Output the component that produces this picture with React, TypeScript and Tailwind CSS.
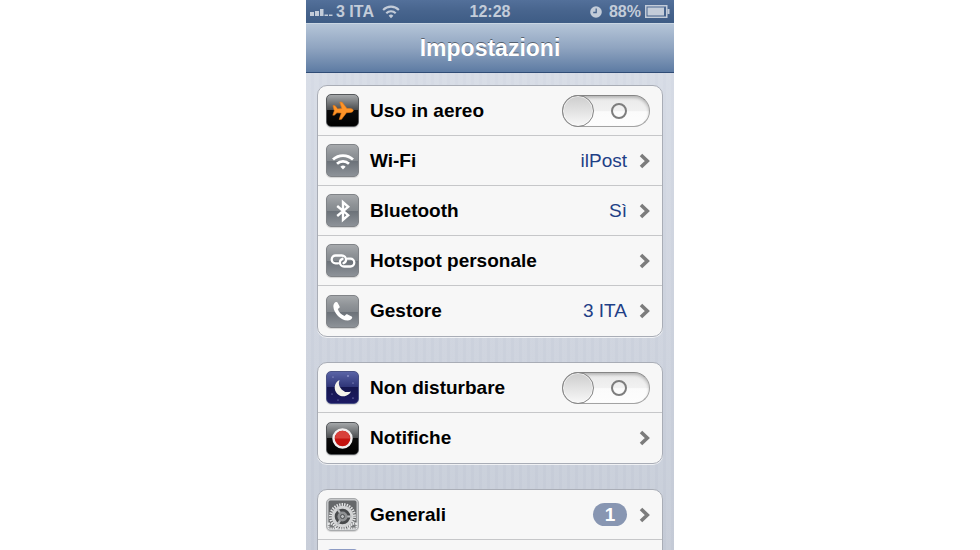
import clsx from 'clsx'
import type { FC, ReactNode } from 'react'
import React, { useState } from 'react'

type TileProps = {
  className: string
  children?: ReactNode
}

const Tile: FC<TileProps> = ({ className, children }) => (
  <span
    className={clsx(
      'flex size-[33px] flex-none items-center justify-center overflow-hidden rounded-[5px] border shadow-[0_1px_1px_rgba(0,0,0,0.15)]',
      className
    )}
  >
    {children}
  </span>
)

const GRAY_TILE =
  'border-[#808387] bg-[linear-gradient(#a6a9ac_0%,#8f9397_30%,#84898e_50%,#6b7178_51%,#8d9298_100%)]'
const BLACK_TILE =
  'border-[#55585b] bg-[linear-gradient(#a5a8aa_0%,#4a4c4e_48%,#0c0c0c_50%,#000_100%)]'

const PlaneIcon = () => (
  <svg viewBox="0 0 33 33" className="size-[33px] flex-none" aria-hidden="true">
    <path
      d="M7 11.500l2.100.200 2.500 3.200 4.200-.300-2-6.600 2.300.200 4.800 6.300 3.500.100c1.600.100 2.900 1 2.900 1.900s-1.300 1.800-2.900 1.900l-3.900.3-5 6.600-2.300.1 2.100-6.400-4.400-.2-2.400 2.300-1.700.1 1.500-4.400z"
      fill="#ff9428"
      stroke="#ea7a12"
      strokeWidth=".6"
    />
  </svg>
)

const WifiIcon = () => (
  <svg viewBox="0 0 24 18" className="h-[18px] w-6 flex-none" aria-hidden="true">
    <g fill="none" stroke="#fff" strokeWidth="2.8">
      <path d="M2 7.600a14.500 14.500 0 0 1 20 0" />
      <path d="M6 11.800a8.700 8.700 0 0 1 12 0" />
    </g>
    <path d="M9.400 14.700a4 4 0 0 1 5.200 0L12 17.600z" fill="#fff" />
  </svg>
)

const BluetoothIcon = () => (
  <svg viewBox="0 0 16 24" className="h-6 w-4 flex-none" aria-hidden="true">
    <path
      d="M2.200 7l11 9.200L8 20.900V3.100l5.200 4.700-11 9.200"
      fill="none"
      stroke="#fff"
      strokeWidth="2.400"
    />
  </svg>
)

const HotspotIcon = () => (
  <svg viewBox="0 0 26 18" className="h-[18px] w-[26px] flex-none" aria-hidden="true">
    <g fill="none" stroke="#fff" strokeWidth="2.300" strokeLinecap="round">
      <path d="M8.200 11.300H5.600a3.900 3.900 0 0 1 0-7.800h6.200c2.600 0 4.300 1.900 4.300 4 0 1.700-1 3.100-2.600 3.700" />
      <path d="M17.800 6.700h2.600a3.900 3.900 0 0 1 0 7.800h-6.200c-2.600 0-4.300-1.900-4.300-4 0-1.700 1-3.100 2.600-3.700" />
    </g>
  </svg>
)

const PhoneIcon = () => (
  <svg viewBox="0 0 24 24" className="size-6 flex-none" aria-hidden="true">
    <path
      d="M3.300 4.300C4 3.200 5 2.800 6 3.200l.5.4 2 3.600c.4.700.2 1.500-.4 1.900l-1.300.9c.9 2.900 3.600 5.800 6.700 7l1.300-1.200c.5-.5 1.200-.6 1.800-.3l4 2c.6.300.8.900.5 1.500-.7 1.600-2.400 2.600-4.600 2.500C9.600 21.300 2.700 14 2.400 7.700c-.1-1.300.3-2.500.9-3.400z"
      fill="#fff"
    />
  </svg>
)

const MoonIcon = () => (
  <svg viewBox="0 0 33 33" className="size-[33px] flex-none" aria-hidden="true">
    <g fill="#b7bbe8">
      <circle cx="7" cy="6" r=".6" />
      <circle cx="22" cy="5" r=".8" />
      <circle cx="27" cy="12" r=".6" />
      <circle cx="6" cy="23" r=".5" />
      <circle cx="12" cy="29" r=".5" />
      <circle cx="27" cy="27" r=".6" />
    </g>
    <path d="M13.500 9a8.600 8.600 0 1 0 11.500 11.500A9 9 0 0 1 13.500 9z" fill="#f4f2ea" />
  </svg>
)

const RecordIcon = () => (
  <svg viewBox="0 0 33 33" className="size-[33px] flex-none" aria-hidden="true">
    <circle cx="16.500" cy="16.500" r="9" fill="#c4130f" stroke="#f1efef" strokeWidth="2.400" />
    <path d="M8.800 16.500a7.700 7.700 0 0 1 15.400 0z" fill="#d8403a" />
  </svg>
)

const GearIcon = () => (
  <svg viewBox="0 0 33 33" className="size-[33px] flex-none" aria-hidden="true">
    <rect x="2.500" y="2.500" width="28" height="28" rx="2" fill="#66686a" />
    <circle cx="16.500" cy="18.500" r="12" fill="none" stroke="#e2e3e4" strokeWidth="3" strokeDasharray="1.400 1.113" />
    <circle cx="16.500" cy="18.500" r="9.300" fill="#47494b" stroke="#d3d4d5" strokeWidth="3" />
    <path d="M16.500 18.500l-5-7.500M16.500 18.500h9M16.500 18.500l-5 8" stroke="#b9bbbd" strokeWidth="2.200" />
    <circle cx="16.500" cy="18.500" r="5" fill="#8f9193" />
    <circle cx="16.500" cy="18.500" r="2" fill="#bbbdbf" stroke="#4c4e50" />
    <g fill="#77797b" stroke="#e4e5e6" strokeWidth="2">
      <path d="M2.500 25.500a7 7 0 0 1 7.500 5H2.500zM30.500 25.500a7 7 0 0 0-7.500 5h7.500z" strokeDasharray="1.500 .8" />
    </g>
  </svg>
)

const Chevron = () => (
  <svg viewBox="0 0 12 16" className="h-4 w-3 flex-none" aria-hidden="true">
    <path d="M3 2l6.300 6L3 14" fill="none" stroke="#7c7c7c" strokeWidth="3.600" />
  </svg>
)

const ROW = 'flex h-[50px] items-center pr-3 pl-2'
const LABEL = 'ml-[11px] flex-1 text-[19px] leading-6 font-bold text-black'

type LinkRowProps = {
  icon: ReactNode
  label: string
  value?: string
  badge?: number
}

const LinkRow: FC<LinkRowProps> = ({ icon, label, value, badge }) => (
  <a href="#" className={ROW}>
    {icon}
    <span className={LABEL}>{label}</span>
    {value && <span className="text-[19px] leading-6 text-[#1f4086]">{value}</span>}
    {badge && (
      <span className="flex h-[23px] w-[34px] items-center justify-center rounded-full bg-[#8896b2] text-[19px] leading-6 font-bold text-white">
        {badge}
      </span>
    )}
    <span className="ml-[11px]">
      <Chevron />
    </span>
  </a>
)

type SwitchRowProps = {
  icon: ReactNode
  label: string
}

const SwitchRow: FC<SwitchRowProps> = ({ icon, label }) => {
  const [checked, setChecked] = useState(false)

  return (
    <label className={clsx(ROW, 'relative')}>
      {icon}
      <span className={LABEL}>{label}</span>
      <input
        type="checkbox"
        role="switch"
        className="sr-only"
        checked={checked}
        onChange={() => setChecked(!checked)}
      />
      <span
        className={clsx(
          'flex h-8 w-[88px] items-center rounded-full border border-[#a3a3a3] border-t-[#858585] shadow-[inset_0_2px_3px_rgba(0,0,0,0.22)]',
          checked
            ? 'flex-row-reverse bg-[#3b7fe0]'
            : 'bg-[linear-gradient(#e9e9e9_0%,#f1f1f1_50%,#fbfbfb_52%,#fdfdfd_100%)]'
        )}
      >
        <span className="-mx-px size-8 flex-none rounded-full border border-[#858585] bg-[linear-gradient(#cdcdcd,#f8f8f8)] shadow-[inset_0_0_0_1px_rgba(255,255,255,0.6)]" />
        <span className="flex flex-1 justify-center pr-1">
          <span
            className={clsx(
              'size-4 rounded-full border-2',
              checked ? 'border-white' : 'border-[#7d7d7d]'
            )}
          />
        </span>
      </span>
    </label>
  )
}

const Group: FC<{ children: ReactNode }> = ({ children }) => (
  <section className="divide-y divide-[#c6c7c9] rounded-[10px] border border-[#a9adb6] bg-[#f7f7f7] shadow-[0_1px_0_rgba(255,255,255,0.7)]">
    {children}
  </section>
)

const StatusBar = () => (
  <div className="grid h-[23px] grid-cols-3 items-center bg-[linear-gradient(#53709a_0%,#48658e_45%,#3e5c85_100%)] pr-1 pl-1 text-[16px] leading-5 font-bold text-[#c3ccd9]">
    <div className="flex items-center">
      <svg viewBox="0 0 23 10" className="h-[10px] w-[23px]" fill="#c3ccd9" aria-hidden="true">
        <path d="M0 5h4v4H0zM5 4h4v5H5zM10 2h3.500v7H10zM14.500 7.500h3.500v1.500h-3.500zM19 7.500h3.500v1.500H19z" />
      </svg>
      <span className="ml-[3px]">3 ITA</span>
      <svg viewBox="0 0 24 18" className="ml-2 h-[14px] w-[18px]" aria-hidden="true">
        <g fill="none" stroke="#c3ccd9" strokeWidth="2.800">
          <path d="M1.500 6.200a14.800 14.800 0 0 1 21 0" />
          <path d="M5.700 10.600a9 9 0 0 1 12.600 0" />
        </g>
        <path d="M8.900 14a4.400 4.400 0 0 1 6.200 0L12 17.200z" fill="#c3ccd9" />
      </svg>
    </div>
    <time className="text-center">12:28</time>
    <div className="flex items-center justify-end">
      <svg viewBox="0 0 12 12" className="size-3" aria-hidden="true">
        <circle cx="6" cy="6" r="5.800" fill="#c3ccd9" />
        <path d="M6.200 2.500V6.500H3.200" fill="none" stroke="#48658e" strokeWidth="1.300" />
      </svg>
      <span className="ml-[7px]">88%</span>
      <svg viewBox="0 0 25 13" className="ml-1 h-[13px] w-[25px]" aria-hidden="true">
        <rect x=".75" y=".75" width="21" height="11.500" fill="none" stroke="#c3ccd9" strokeWidth="1.500" />
        <path d="M2.500 2.500h16.500v8H2.500zM22.500 4h2v5h-2z" fill="#c3ccd9" />
      </svg>
    </div>
  </div>
)

const App = () => (
  <div className="flex h-screen justify-center overflow-hidden bg-white font-['Liberation_Sans',Arial,sans-serif]">
    <div className="w-full max-w-[368px] bg-[linear-gradient(#d8dde7,#c4cad6)]">
      <StatusBar />
      <header className="flex h-[50px] items-center justify-center border-t border-b border-t-[#c9d6e3] border-b-[#2f4c76] bg-[linear-gradient(#b5c5d8_0%,#8fa4c0_50%,#5d7ba3_100%)]">
        <h1 className="text-[23px] leading-7 font-bold text-white [text-shadow:0_-1px_0_rgba(0,0,0,0.45)]">
          Impostazioni
        </h1>
      </header>
      <main className="flex flex-col gap-[25px] bg-[repeating-linear-gradient(90deg,rgba(255,255,255,0.08)_0px,rgba(255,255,255,0.08)_5px,rgba(255,255,255,0)_5px,rgba(255,255,255,0)_8px)] px-[11px] pt-3">
        <Group>
          <SwitchRow icon={<Tile className={BLACK_TILE}><PlaneIcon /></Tile>} label="Uso in aereo" />
          <LinkRow icon={<Tile className={GRAY_TILE}><WifiIcon /></Tile>} label="Wi-Fi" value="ilPost" />
          <LinkRow icon={<Tile className={GRAY_TILE}><BluetoothIcon /></Tile>} label="Bluetooth" value="Sì" />
          <LinkRow icon={<Tile className={GRAY_TILE}><HotspotIcon /></Tile>} label="Hotspot personale" />
          <LinkRow icon={<Tile className={GRAY_TILE}><PhoneIcon /></Tile>} label="Gestore" value="3 ITA" />
        </Group>
        <Group>
          <SwitchRow
            icon={
              <Tile className="border-[#4a5285] bg-[linear-gradient(#5a64a6_0%,#2f3578_48%,#15164f_50%,#1c1a63_100%)]">
                <MoonIcon />
              </Tile>
            }
            label="Non disturbare"
          />
          <LinkRow icon={<Tile className={BLACK_TILE}><RecordIcon /></Tile>} label="Notifiche" />
        </Group>
        <Group>
          <LinkRow icon={<Tile className="border-[#a8aaac] bg-[#c6c8ca]"><GearIcon /></Tile>} label="Generali" badge={1} />
          <div className={ROW}>
            <Tile className="border-[#8d9cc4] bg-[#c3c5ea]" />
          </div>
        </Group>
      </main>
    </div>
  </div>
)

export default App
